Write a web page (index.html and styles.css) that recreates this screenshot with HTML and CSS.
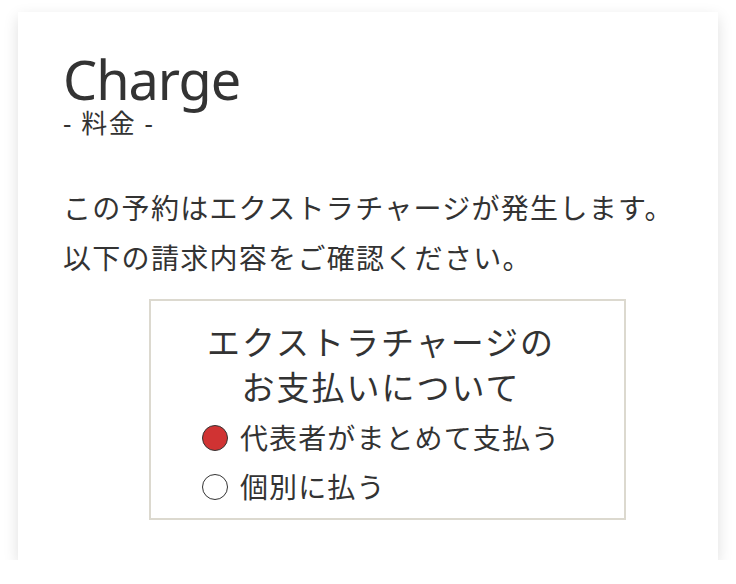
FILE: index.html
```html
<!DOCTYPE html>
<html lang="ja">
<head>
	<meta charset="utf-8">
	<title>Charge</title>
	<link rel="stylesheet" href="styles.css">
</head>
<body>
	<div class="card">
		<h1 class="title">Charge</h1>
		<p class="subtitle">- 料金 -</p>
		<p class="lead">この予約はエクストラチャージが発生します。<br>以下の請求内容をご確認ください。</p>
		<div class="choice-box">
			<div class="choice">
				<h2 class="choice-title">エクストラチャージの<br>お支払いについて</h2>
				<label class="option"><span class="radio checked"></span>代表者がまとめて支払う</label>
				<label class="option"><span class="radio"></span>個別に払う</label>
			</div>
		</div>
	</div>
</body>
</html>
```

FILE: styles.css
```css
body {
	margin: 0;
	background-color: #fff;
	font-family: "Noto Sans", "Noto Sans CJK JP", sans-serif;
	color: #333;
}
.card {
	width: 700px;
	height: 548px;
	margin: 12px 0 0 18px;
	padding: 38px 20px 0 45px;
	box-sizing: border-box;
	background-color: #fff;
	box-shadow: 0 5px 14px rgba(0,0,0,0.13);
}
.title {
	margin: 0;
	font-size: 54px;
	font-weight: normal;
	letter-spacing: -1px;
	line-height: 58px;
}
.subtitle {
	margin: 0;
	font-size: 26px;
	letter-spacing: 1.5px;
	line-height: 30px;
}
.lead {
	margin: 44px 0 0;
	font-family: "Noto Sans CJK JP", sans-serif;
	font-size: 28px;
	letter-spacing: 1.3px;
	line-height: 50px;
	white-space: nowrap;
}
.choice-box {
	width: 477px;
	height: 221px;
	margin: 17px 0 0 86px;
	padding: 18px 0 0 51px;
	box-sizing: border-box;
	border: 2px solid #dcd9cf;
}
.choice {
	display: inline-block;
	font-family: "Noto Sans CJK JP", sans-serif;
	white-space: nowrap;
}
.choice-title {
	margin: 0 0 4px;
	font-size: 33px;
	font-weight: normal;
	letter-spacing: 2px;
	line-height: 45px;
	text-align: center;
}
.option {
	display: flex;
	align-items: center;
	gap: 12px;
	font-size: 28px;
	letter-spacing: 1.1px;
	line-height: 49px;
}
.radio {
	width: 26px;
	height: 26px;
	border: 1.5px solid #333;
	border-radius: 50%;
	box-sizing: border-box;
}
.radio.checked {
	background-color: #d03333;
}
```
